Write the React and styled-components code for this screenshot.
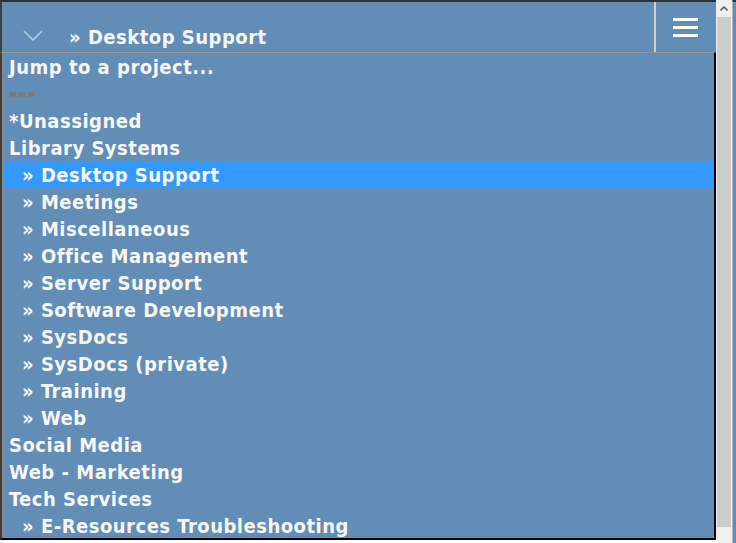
import React from "react";
import styled, { createGlobalStyle } from "styled-components";

const blue = "#628db6";

const Global = createGlobalStyle`
  html, body {
    margin: 0;
    padding: 0;
    background: #ffffff;
    overflow: hidden;
  }
`;

const Page = styled.div`
  width: 736px;
  height: 543px;
  display: flex;
  font-family: "DejaVu Sans Condensed", "DejaVu Sans", sans-serif;
  font-weight: bold;
  font-size: 20px;
  letter-spacing: 0.5px;
  color: #f7f7f7;
`;

const Main = styled.div`
  width: 716px;
  display: flex;
  flex-direction: column;
`;

const Header = styled.header`
  height: 50px;
  display: flex;
  align-items: stretch;
  background: ${blue};
  border-top: 2px solid #333333;
  border-left: 2px solid #3f3f3f;
`;

const Toggle = styled.div`
  width: 62px;
  display: flex;
  align-items: center;
  justify-content: center;
  padding-top: 18px;
  padding-right: 2px;
`;

const Title = styled.div`
  flex: 1;
  padding-left: 3px;
  line-height: 50px;
  padding-top: 10px;
  white-space: nowrap;
`;

const MenuButton = styled.div`
  width: 58px;
  border-left: 2px solid #d0d0d0;
  display: flex;
  flex-direction: column;
  align-items: center;
  justify-content: center;
  gap: 5px;
  padding-right: 2px;
`;

const Bar = styled.span`
  display: block;
  width: 25px;
  height: 3px;
  background: #ffffff;
`;

const ListBox = styled.div`
  height: 485px;
  overflow: hidden;
  background: ${blue};
  border-top: 1px solid #9a9a9a;
  border-left: 2px solid #3f3f3f;
  border-right: 2px solid #000000;
  border-bottom: 2px solid #000000;
  box-shadow: inset 1px 0 0 #8a8a8a;
`;

const Option = styled.div`
  height: 27px;
  line-height: 28px;
  padding-left: ${(p) => (p.$child ? "19px" : "6px")};
  margin-left: 1px;
  white-space: nowrap;
  background: ${(p) => (p.$selected ? "#3399ff" : "transparent")};
  color: #f7f7f7;
`;

const Divider = styled.span`
  font-size: 22px;
  letter-spacing: 1px;
  color: #7a7a7a;
  -webkit-text-stroke: 1px #7a7a7a;
`;

const Scrollbar = styled.div`
  width: 16px;
  display: flex;
  flex-direction: column;
  background: #f0f0f0;
`;

const ArrowButton = styled.div`
  height: 17px;
  display: flex;
  align-items: center;
  justify-content: center;
`;

const Thumb = styled.div`
  height: 510px;
  margin: 0 1px;
  background: #cdcdcd;
`;

const Edge = styled.div`
  width: 3px;
  background: ${blue};
  border-left: 1px solid #b5b5b5;
  border-top: 2px solid #333333;
`;

const options = [
  { label: "Jump to a project..." },
  { label: "---", divider: true },
  { label: "*Unassigned" },
  { label: "Library Systems" },
  { label: "» Desktop Support", child: true, selected: true },
  { label: "» Meetings", child: true },
  { label: "» Miscellaneous", child: true },
  { label: "» Office Management", child: true },
  { label: "» Server Support", child: true },
  { label: "» Software Development", child: true },
  { label: "» SysDocs", child: true },
  { label: "» SysDocs (private)", child: true },
  { label: "» Training", child: true },
  { label: "» Web", child: true },
  { label: "Social Media" },
  { label: "Web - Marketing" },
  { label: "Tech Services" },
  { label: "» E-Resources Troubleshooting", child: true },
];

export default function App() {
  return (
    <>
      <Global />
      <Page>
        <Main>
          <Header>
            <Toggle>
              <svg width="20" height="12" viewBox="0 0 20 12">
                <path d="M1 1 L10 10 L19 1" fill="none" stroke="#b3cbe0" strokeWidth="1.6" />
              </svg>
            </Toggle>
            <Title>» Desktop Support</Title>
            <MenuButton>
              <Bar />
              <Bar />
              <Bar />
            </MenuButton>
          </Header>
          <ListBox>
            {options.map((o) => (
              <Option key={o.label} $child={o.child} $selected={o.selected}>
                {o.divider ? <Divider>{o.label}</Divider> : o.label}
              </Option>
            ))}
          </ListBox>
        </Main>
        <Scrollbar>
          <ArrowButton>
            <svg width="8" height="5" viewBox="0 0 8 5">
              <path d="M0.5 4.5 L4 1 L7.5 4.5" fill="none" stroke="#606060" strokeWidth="1.6" />
            </svg>
          </ArrowButton>
          <Thumb />
        </Scrollbar>
        <Edge />
      </Page>
    </>
  );
}
